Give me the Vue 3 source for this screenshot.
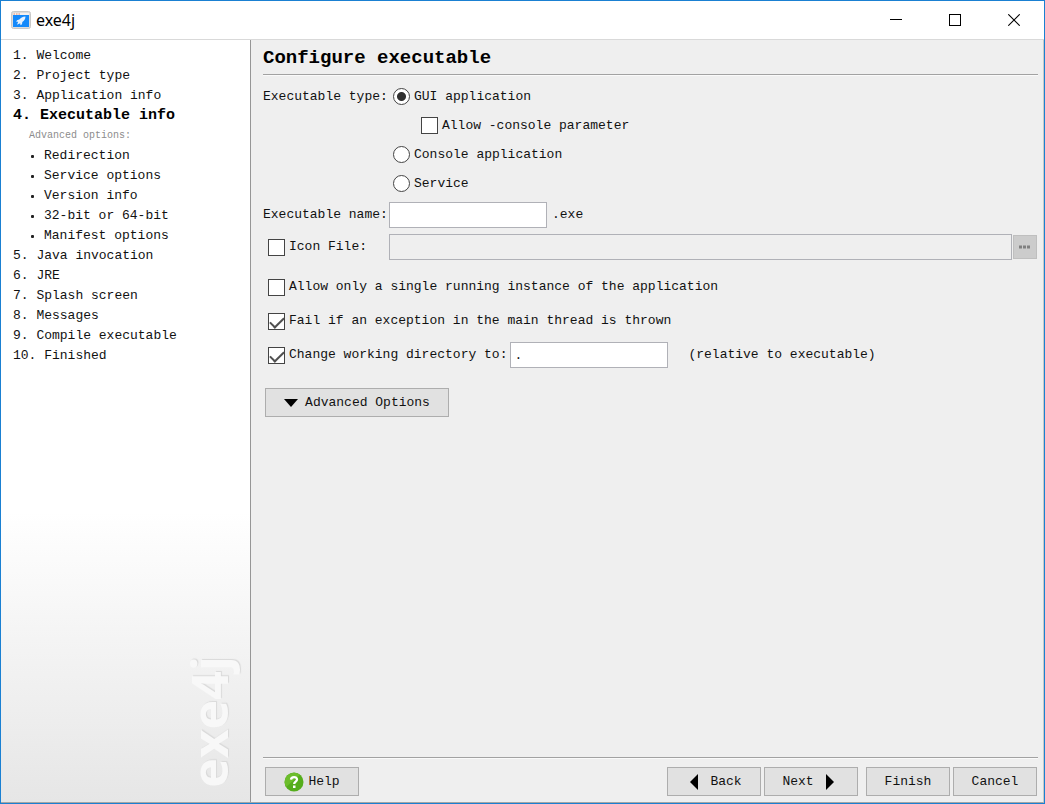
<script setup>
import { ref } from 'vue'

const before = [
  { n: '1.', text: 'Welcome' },
  { n: '2.', text: 'Project type' },
  { n: '3.', text: 'Application info' },
  { n: '4.', text: 'Executable info', current: true },
]
const advanced = ['Redirection', 'Service options', 'Version info', '32-bit or 64-bit', 'Manifest options']
const after = [
  { n: '5.', text: 'Java invocation' },
  { n: '6.', text: 'JRE' },
  { n: '7.', text: 'Splash screen' },
  { n: '8.', text: 'Messages' },
  { n: '9.', text: 'Compile executable' },
  { n: '10.', text: 'Finished' },
]

const type = ref('gui')
const allowConsole = ref(false)
const exeName = ref('')
const useIcon = ref(false)
const iconFile = ref('')
const single = ref(false)
const fail = ref(true)
const changeDir = ref(true)
const dir = ref('.')
</script>

<template>
  <div class="window">
    <header class="titlebar">
      <svg class="app-icon" width="20" height="18" viewBox="0 0 20 18" aria-hidden="true">
        <rect x="0.5" y="0.5" width="19" height="17" rx="2" fill="#dcdcdc" stroke="#c8c8c8" />
        <rect x="2" y="2" width="16" height="2" fill="#f4f0ee" />
        <path d="M2.500 3h1.500M5 3h1.500M7.500 3h1.500" stroke="#e88a6a" />
        <rect x="2" y="4" width="16" height="12" fill="#1389fb" />
        <path d="M14.500 5.500C11.500 5.700 9.500 7 8.300 8.600L6 9.200l-.8 1.500 2 .1L6 13.800l3.200-1.500.3 1.900 1.500-1 .3-2.200c1.900-1.400 3.100-3 3.200-5.500z" fill="#e4f1ff" />
      </svg>
      <span class="title">exe4j</span>
      <div class="controls">
        <button type="button" aria-label="Minimize">
          <svg width="12" height="12" viewBox="0 0 12 12"><path d="M0 5.500h12" stroke="#000" /></svg>
        </button>
        <button type="button" aria-label="Maximize">
          <svg width="12" height="12" viewBox="0 0 12 12"><rect x="0.5" y="0.5" width="11" height="11" fill="none" stroke="#000" /></svg>
        </button>
        <button type="button" aria-label="Close">
          <svg width="12" height="12" viewBox="0 0 12 12"><path d="M0.300 0.300l11.400 11.400M11.700 0.300L0.300 11.700" stroke="#000" stroke-width="1.100" /></svg>
        </button>
      </div>
    </header>

    <div class="body">
      <nav class="sidebar">
        <ul>
          <li v-for="s in before" :key="s.n" :class="{ current: s.current }">
            <a href="#">{{ s.n }}&nbsp;{{ s.text }}</a>
          </li>
          <li class="sub-title">Advanced options:</li>
          <li v-for="a in advanced" :key="a" class="sub">
            <span class="dot"></span><a href="#">{{ a }}</a>
          </li>
          <li v-for="s in after" :key="s.n">
            <a href="#">{{ s.n }}&nbsp;{{ s.text }}</a>
          </li>
        </ul>
        <div class="brand" aria-hidden="true">exe4j</div>
      </nav>

      <main class="main">
        <h1>Configure executable</h1>
        <form class="form" @submit.prevent>
          <div class="row types">
            <span id="type-label" class="label">Executable type:</span>
            <div class="radios" role="radiogroup" aria-labelledby="type-label">
              <label><input v-model="type" type="radio" name="type" value="gui" />GUI application</label>
              <label class="nested"><input v-model="allowConsole" type="checkbox" />Allow -console parameter</label>
              <label><input v-model="type" type="radio" name="type" value="console" />Console application</label>
              <label><input v-model="type" type="radio" name="type" value="service" />Service</label>
            </div>
          </div>
          <div class="row field-row">
            <label class="label" for="exe-name">Executable name:</label>
            <input id="exe-name" v-model="exeName" class="text short" type="text" />
            <span class="suffix">.exe</span>
          </div>
          <div class="row field-row">
            <label class="label check"><input v-model="useIcon" type="checkbox" />Icon File:</label>
            <input v-model="iconFile" class="text wide" type="text" aria-label="Icon file path" disabled />
            <button class="browse" type="button" aria-label="Browse" disabled>
              <svg width="12" height="4" viewBox="0 0 12 4"><path d="M0 2h11" stroke="#808080" stroke-width="3" stroke-dasharray="3 1" /></svg>
            </button>
          </div>
          <div class="options">
            <label class="check"><input v-model="single" type="checkbox" />Allow only a single running instance of the application</label>
            <label class="check"><input v-model="fail" type="checkbox" />Fail if an exception in the main thread is thrown</label>
            <div class="dir">
              <label class="check"><input v-model="changeDir" type="checkbox" />Change working directory to:</label>
              <input v-model="dir" class="text short" type="text" aria-label="Working directory" />
              <span class="note">(relative to executable)</span>
            </div>
          </div>
          <button class="btn advanced" type="button">
            <svg width="14" height="8" viewBox="0 0 14 8"><path d="M0 0h14L7 8z" /></svg>
            Advanced Options
          </button>
        </form>

        <footer class="footer">
          <button class="btn help" type="button">
            <svg width="20" height="20" viewBox="0 0 20 20">
              <circle cx="10" cy="10" r="9.500" fill="#55ad1c" />
              <path d="M2 15A9.500 9.500 0 0 1 16 2.700z" fill="#6cbd2b" />
              <path d="M7 7.600C7.200 4.200 13 4.200 13 7.500c0 2.200-2.800 2.100-2.800 4.600" fill="none" stroke="#fff" stroke-width="2.300" />
              <rect x="9" y="13.500" width="2.500" height="2.500" fill="#fff" />
            </svg>
            Help
          </button>
          <span class="spacer"></span>
          <button class="btn step back" type="button">
            <svg width="8" height="16" viewBox="0 0 8 16"><path d="M8 0v16L0 8z" /></svg>
            Back
          </button>
          <button class="btn step next" type="button">
            Next
            <svg width="8" height="16" viewBox="0 0 8 16"><path d="M0 0v16l8-8z" /></svg>
          </button>
          <button class="btn end finish" type="button">Finish</button>
          <button class="btn end" type="button">Cancel</button>
        </footer>
      </main>
    </div>
  </div>
</template>

<style>
body {
  margin: 0;
}
</style>

<style scoped>
* {
  box-sizing: border-box;
}
.window {
  display: flex;
  flex-direction: column;
  min-height: 100vh;
  border: 1px solid #1a80d2;
  background: #efefef;
  color: #111;
  font: 13px/20px "Liberation Mono", "Courier New", monospace;
}
button,
input {
  font: inherit;
  color: inherit;
}
.titlebar {
  display: flex;
  align-items: center;
  height: 39px;
  padding: 0 1px 0 10px;
  background: #fff;
  border-bottom: 1px solid #d9d9d9;
}
.title {
  margin-left: 5px;
  font: 16px/20px "Noto Sans", "Open Sans", sans-serif;
  color: #000;
}
.controls {
  display: flex;
  align-self: stretch;
  margin-left: auto;
}
.controls button {
  display: flex;
  align-items: center;
  justify-content: center;
  width: 59px;
  padding: 0;
  border: 0;
  background: transparent;
}
.body {
  display: flex;
  flex: 1;
  border-right: 1px solid #c8c8c8;
  border-bottom: 1px solid #a5a5a5;
}
.sidebar {
  display: flex;
  flex-direction: column;
  justify-content: space-between;
  flex: 0 0 250px;
  padding: 6px 0 14px 12px;
  border-right: 1px solid #969696;
  background: linear-gradient(#fff 62%, #e6e6e6);
}
.sidebar ul {
  margin: 0;
  padding: 0;
  list-style: none;
}
.sidebar li {
  height: 20px;
  white-space: nowrap;
}
.sidebar a {
  color: inherit;
  text-decoration: none;
}
.sidebar .current {
  font-size: 15px;
  font-weight: bold;
  color: #000;
}
.sidebar .sub-title {
  padding-left: 16px;
  font-size: 10px;
  color: #8c8c8c;
}
.sidebar .sub {
  display: flex;
  align-items: center;
  gap: 10px;
  padding-left: 18px;
}
.dot {
  width: 3px;
  height: 3px;
  border-radius: 1px;
  background: #222;
}
.brand {
  align-self: flex-end;
  margin-right: 11px;
  writing-mode: vertical-rl;
  transform: rotate(180deg);
  font: bold 50px/60px "Open Sans", sans-serif;
  color: #f8f8f8;
  text-shadow: 1px 1px 1px #d9d9d9;
}
.main {
  display: flex;
  flex-direction: column;
  flex: 1;
  min-width: 0;
  padding: 0 5px 6px 12px;
}
h1 {
  margin: 0;
  padding: 6px 0 4px;
  border-bottom: 1px solid #a2a2a2;
  box-shadow: 0 1px #fafafa;
  font-size: 19px;
  line-height: 24px;
  color: #000;
}
.form {
  display: flex;
  flex-direction: column;
  flex: 1;
  align-items: stretch;
  padding-top: 7px;
}
.row {
  display: flex;
}
.label {
  flex: 0 0 126px;
  white-space: nowrap;
}
.types .label {
  line-height: 29px;
}
.radios {
  display: flex;
  flex-direction: column;
  padding-left: 4px;
}
.radios label {
  display: flex;
  align-items: center;
  gap: 4px;
  height: 29px;
}
.radios .nested {
  padding-left: 28px;
}
.field-row {
  align-items: center;
  height: 26px;
  margin-top: 4px;
}
.field-row + .field-row {
  margin-top: 6px;
}
.check {
  display: flex;
  align-items: center;
  gap: 4px;
  padding-left: 5px;
  white-space: nowrap;
}
input[type='radio'],
input[type='checkbox'] {
  appearance: none;
  flex: none;
  width: 17px;
  height: 17px;
  margin: 0;
  border: 1px solid #444;
  background: #fff;
}
input[type='radio'] {
  border-radius: 50%;
}
input[type='radio']:checked {
  background: radial-gradient(circle, #303030 4px, #fff 5px);
}
input[type='checkbox']:checked::before {
  content: '';
  display: block;
  width: 12px;
  height: 6px;
  margin: 3px 1px;
  border: solid #505050;
  border-width: 0 0 2px 2px;
  transform: rotate(-45deg);
}
input[type='checkbox'] {
  display: flow-root;
}
.text {
  height: 26px;
  margin: 0;
  padding: 2px 3px;
  border: 1px solid #b0b1b7;
  border-radius: 0;
  background: #fff;
}
.text:disabled {
  background: #efefef;
}
.short {
  width: 158px;
}
.wide {
  flex: 1;
  min-width: 0;
}
.suffix {
  margin-left: 5px;
}
.browse {
  display: flex;
  align-items: center;
  justify-content: center;
  width: 24px;
  height: 24px;
  margin: 0 1px 0 1px;
  padding: 0;
  border: 1px solid #bfbfbf;
  background: #ccc;
}
.options {
  display: flex;
  flex-direction: column;
  gap: 14px;
  padding-top: 17px;
}
.dir {
  display: flex;
  align-items: center;
  height: 26px;
  margin-top: -3px;
}
.dir .text {
  margin-left: 3px;
}
.note {
  margin-left: 20px;
}
.btn {
  display: flex;
  align-items: center;
  justify-content: center;
  height: 29px;
  padding: 0;
  border: 1px solid #adadad;
  border-radius: 0;
  background: #e1e1e1;
  white-space: nowrap;
}
.advanced {
  align-self: flex-start;
  gap: 7px;
  width: 184px;
  margin: 20px 0 20px 2px;
}
.footer {
  display: flex;
  padding: 9px 1px 0 2px;
  border-top: 1px solid #a2a2a2;
  box-shadow: inset 0 1px #fafafa;
}
.spacer {
  flex: 1;
}
.help {
  gap: 4px;
  width: 94px;
}
.step {
  gap: 12px;
  width: 94px;
}
.back {
  padding-left: 4px;
}
.next {
  margin-left: 3px;
  padding-right: 6px;
}
.end {
  width: 84px;
  margin-left: 3px;
}
.finish {
  margin-left: 8px;
}
</style>
